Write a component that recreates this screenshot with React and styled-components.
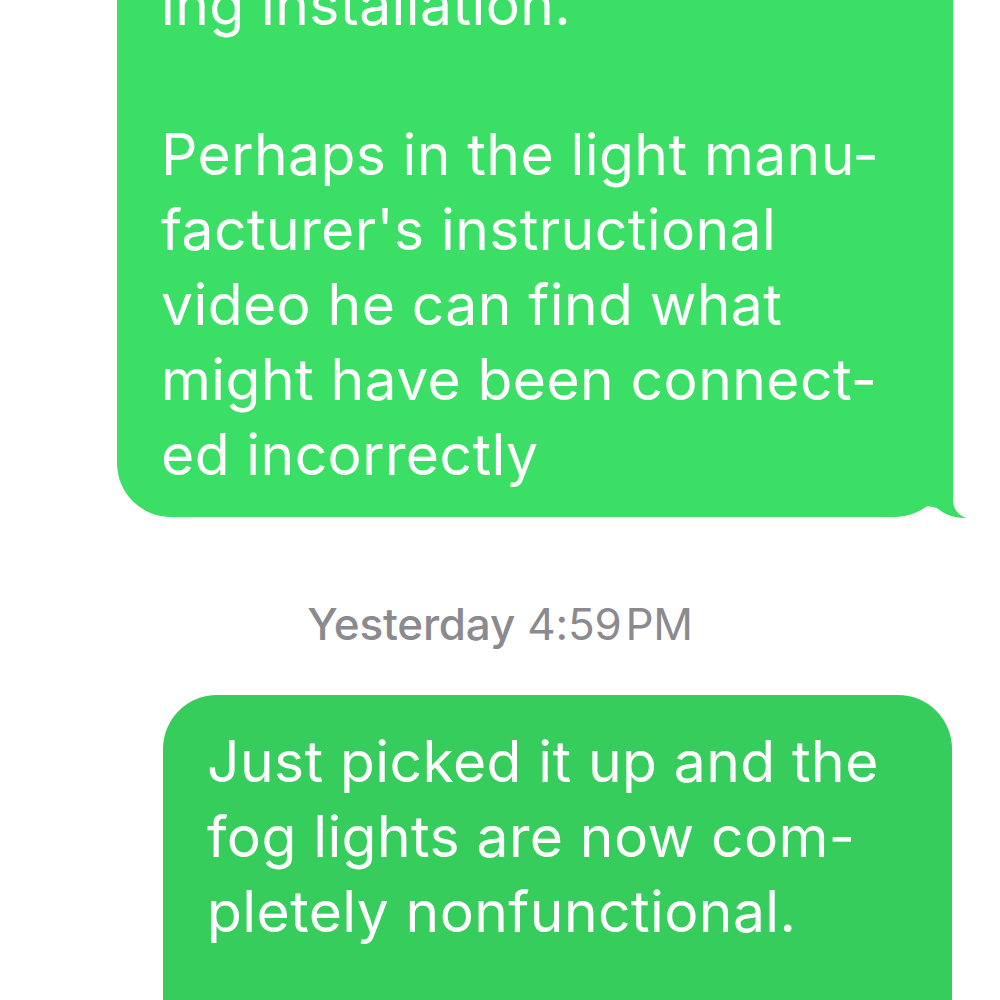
import React from 'react'
import styled, { createGlobalStyle } from 'styled-components'

const GlobalStyle = createGlobalStyle`
  html, body {
    margin: 0;
    padding: 0;
    background: #ffffff;
  }
  body {
    font-family: Inter, "Noto Sans", "Liberation Sans", sans-serif;
    overflow: hidden;
  }
`

const Thread = styled.div`
  width: 1000px;
  height: 1000px;
  overflow: hidden;
  display: flex;
  flex-direction: column;
  align-items: flex-end;
  padding-right: 47px;
  box-sizing: border-box;
`

const Bubble = styled.div`
  position: relative;
  width: ${p => p.$width}px;
  box-sizing: border-box;
  margin-top: ${p => p.$top}px;
  margin-right: ${p => p.$shift || 0}px;
  padding: ${p => p.$padTop}px 30px ${p => p.$padBottom}px 44px;
  background: ${p => p.$color};
  border-radius: 54px;
  border-bottom-right-radius: ${p => (p.$tail ? 60 : 54)}px;
  color: #ffffff;
  font-size: 57px;
  line-height: 75px;
  letter-spacing: 0.4px;
`

const Line = styled.div`
  white-space: pre;
  min-height: 75px;
`

const Tail = styled.svg`
  position: absolute;
  right: -14px;
  bottom: -3px;
  width: 44px;
  height: 64px;
  overflow: visible;
`

const Stamp = styled.div`
  align-self: center;
  margin: 80px 0 0 47px;
  font-size: 44px;
  line-height: 54px;
  color: #8a8a8f;
  letter-spacing: -0.2px;
  b {
    font-weight: 500;
  }
`

const first = [
  'ing installation.',
  '',
  'Perhaps in the light manu-',
  "facturer's instructional",
  'video he can find what',
  'might have been connect-',
  'ed incorrectly',
]

const second = [
  'Just picked it up and the',
  'fog lights are now com-',
  'pletely nonfunctional.',
]

const Message = ({ lines, color, tail, ...rest }) => (
  <Bubble $color={color} $tail={tail} {...rest}>
    {lines.map((l, i) => (
      <Line key={i}>{l}</Line>
    ))}
    {tail && (
      <Tail viewBox="-30 -61 44 64">
        <path
          d="M -16 -61 L 0 -61 L 0 -18 C 0 -8 5 -2 13 1 C 1 1.5 -9 -3 -16 -9 L -25 -11 L -30 -30 Z"
          fill={color}
        />
      </Tail>
    )}
  </Bubble>
)

const App = () => {
  return (
    <>
      <GlobalStyle />
      <Thread>
        <Message
          lines={first}
          color="#3cdf65"
          tail
          $width={836}
          $top={-57}
          $padTop={24}
          $padBottom={25}
        />
        <Stamp>
          <b>Yesterday</b> 4:59&#8202;PM
        </Stamp>
        <Message
          lines={second}
          color="#37cd5c"
          $width={789}
          $top={44}
          $shift={1}
          $padTop={29}
          $padBottom={120}
        />
      </Thread>
    </>
  )
}

export default App
